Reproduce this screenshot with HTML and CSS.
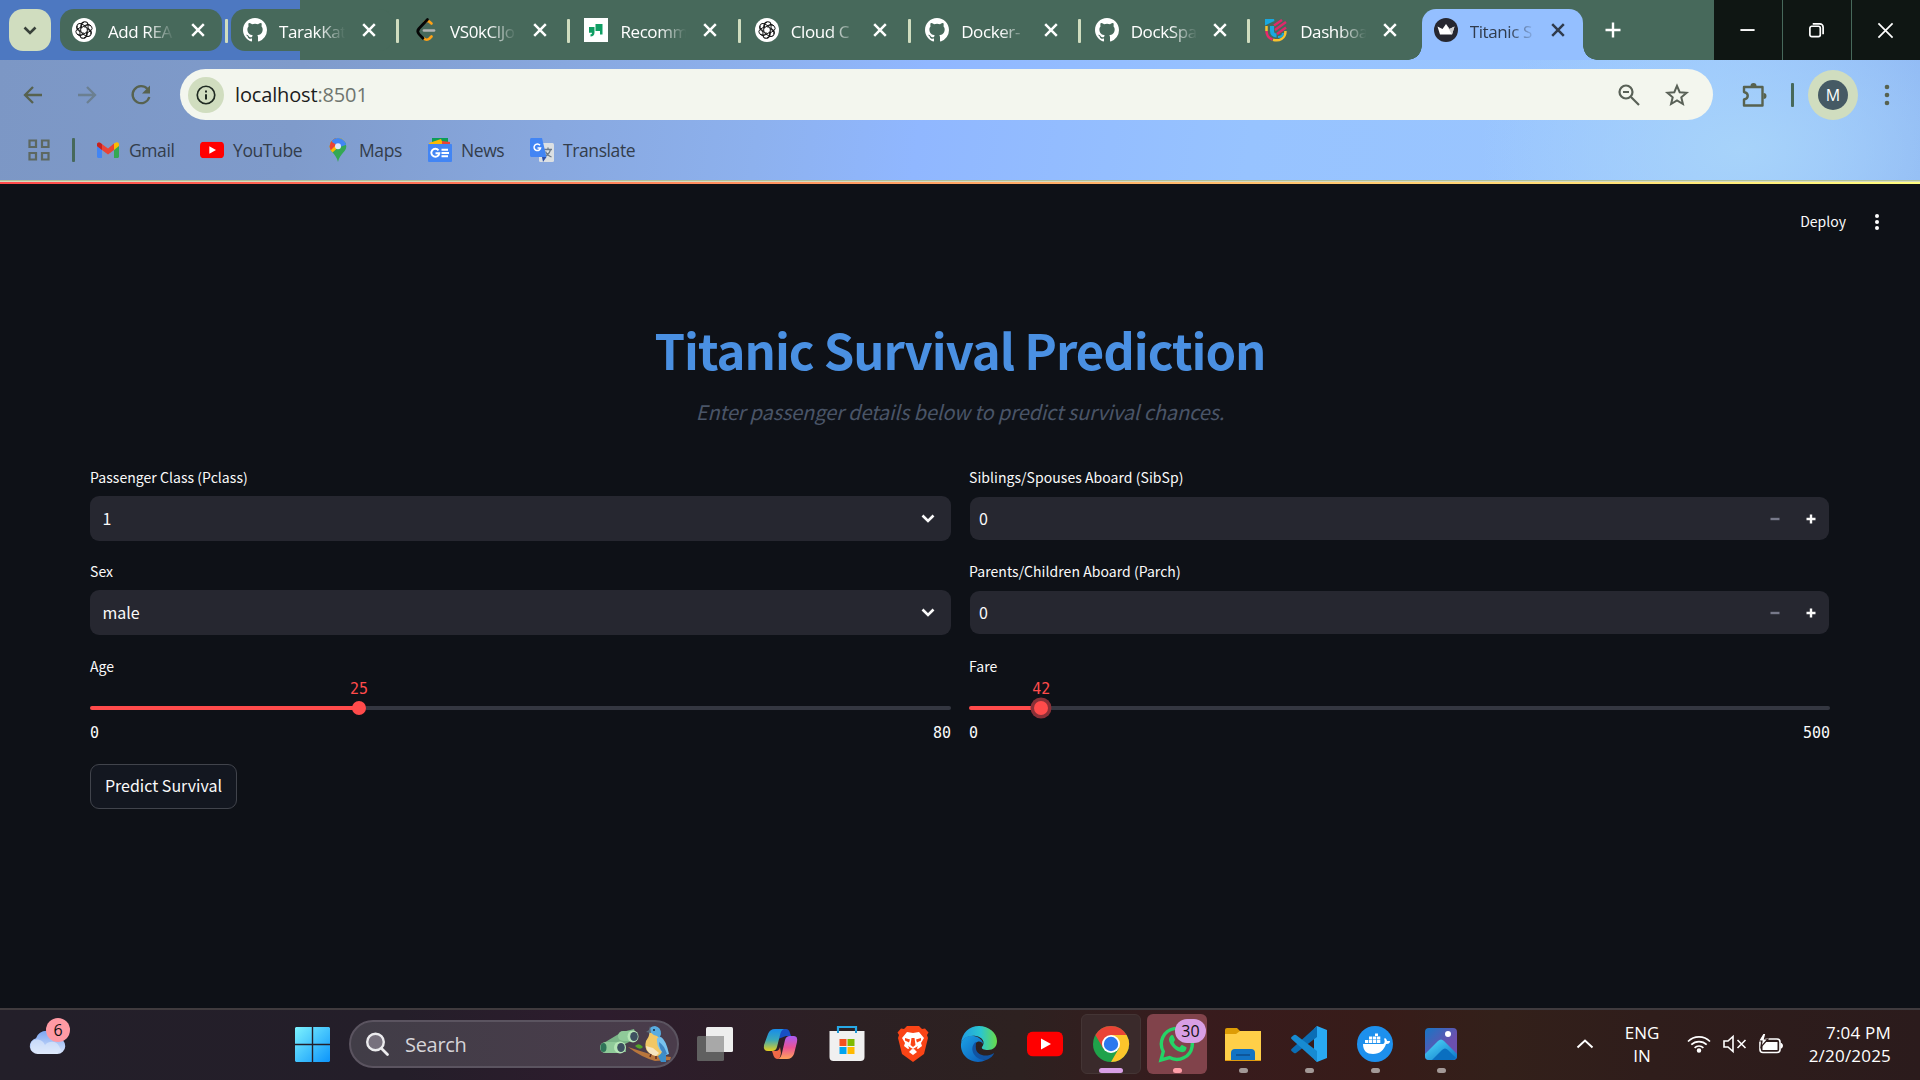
FILE: index.html
```html
<!DOCTYPE html>
<html lang="en">
<head>
<meta charset="utf-8">
<title>Titanic Survival Prediction</title>
<link rel="stylesheet" href="styles.css">
</head>
<body>
<svg class="defs" aria-hidden="true">
  <symbol id="x" viewBox="0 0 24 24"><path d="M6.200 6.200l11.600 11.600M17.800 6.200L6.200 17.800" fill="none" stroke="currentColor" stroke-width="2.500"/></symbol>
  <symbol id="github" viewBox="0 0 16 16"><path fill="#fff" d="M8 0C3.58 0 0 3.58 0 8c0 3.54 2.29 6.53 5.47 7.59.4.07.55-.17.55-.38 0-.19-.01-.82-.01-1.49-2.01.37-2.53-.49-2.69-.94-.09-.23-.48-.94-.82-1.13-.28-.15-.68-.52-.01-.53.63-.01 1.08.58 1.23.82.72 1.21 1.87.87 2.33.66.07-.52.28-.87.51-1.07-1.78-.2-3.64-.89-3.64-3.95 0-.87.31-1.59.82-2.15-.08-.2-.36-1.02.08-2.12 0 0 .67-.21 2.2.82a7.6 7.6 0 0 1 4 0c1.53-1.04 2.2-.82 2.2-.82.44 1.1.16 1.92.08 2.12.51.56.82 1.27.82 2.15 0 3.07-1.87 3.75-3.65 3.95.29.25.54.73.54 1.48 0 1.07-.01 1.93-.01 2.2 0 .21.15.46.55.38A8.01 8.01 0 0 0 16 8c0-4.42-3.58-8-8-8z"/></symbol>
  <symbol id="gpt" viewBox="0 0 24 24"><circle cx="12" cy="12" r="12" fill="#fff"/><g fill="none" stroke="#111" stroke-width=".95"><path id="petal" d="M12 9.200L15.600 7.100a3.300 3.300 0 0 1 3.300 5.600l-4.300 2.500M12 4.400a3.200 3.200 0 0 0-3.300 3.100v5"/><use href="#petal" transform="rotate(60 12 12)"/><use href="#petal" transform="rotate(120 12 12)"/><use href="#petal" transform="rotate(180 12 12)"/><use href="#petal" transform="rotate(240 12 12)"/><use href="#petal" transform="rotate(300 12 12)"/></g></symbol>
  <symbol id="yt" viewBox="0 0 36 25"><rect width="36" height="25" rx="6" fill="#f00"/><path d="M14 7l10 5.500-10 5.500z" fill="#fff"/></symbol>
  <symbol id="chev" viewBox="0 0 24 24"><path d="M6.500 9.500L12 15l5.500-5.500" fill="none" stroke="currentColor" stroke-width="2.600"/></symbol>
</svg>

<header class="tabstrip">
  <button class="tabsearch"><svg><use href="#chev"/></svg></button>
  <div class="tab pill"><svg class="fav"><use href="#gpt"/></svg><span class="name">Add REA</span><svg class="close"><use href="#x"/></svg></div>
  <div class="tab pill"><svg class="fav"><use href="#github"/></svg><span class="name">TarakKat</span><svg class="close"><use href="#x"/></svg></div>
  <div class="tab"><svg class="fav" viewBox="0 0 24 24"><g fill="none" stroke-width="2.700" stroke-linecap="round"><path d="M17.500 5.500l-2-1.700c-1.500-1.200-3.500-1-4.800.3" stroke="#ffa116"/><path d="M17.500 18.500l-2 2c-1.600 1.500-4 1.500-5.600 0" stroke="#ffa116"/><path d="M10 12.500h10" stroke="#b3b3b3"/><path d="M13.500 1.500L5 10.500c-1.600 1.800-1.600 3.800 0 5.600l4 4.200" stroke="#050505"/></g></svg><span class="name">VS0kClJo</span><svg class="close"><use href="#x"/></svg></div>
  <div class="tab"><svg class="fav" viewBox="0 0 24 24"><path fill="#fff" d="M0 0h24v24H0z"/><path fill="#0f9d63" d="M5 9h5.500v5.500c0 2.500-1.500 4-4 4v-2.300c1 0 1.500-.5 1.500-1.500H5zM11.500 6h7v10.500H16V13h-4.500z"/></svg><span class="name">Recomm</span><svg class="close"><use href="#x"/></svg></div>
  <div class="tab"><svg class="fav"><use href="#gpt"/></svg><span class="name">Cloud C</span><svg class="close"><use href="#x"/></svg></div>
  <div class="tab late"><svg class="fav"><use href="#github"/></svg><span class="name">Docker-</span><svg class="close"><use href="#x"/></svg></div>
  <div class="tab late"><svg class="fav"><use href="#github"/></svg><span class="name">DockSpa</span><svg class="close"><use href="#x"/></svg></div>
  <div class="tab late nosep"><svg class="fav" viewBox="0 0 24 24" fill="none" stroke-width="2"><path d="M2 2h8L2 6z" fill="#19a8e0" stroke="#19a8e0"/><path d="M8 8v5c0 3 2 4.500 4.500 4.500" stroke="#19a8e0" stroke-width="4"/><path d="M2.500 8v5" stroke="#f9c22e" stroke-width="2.500"/><path d="M2.500 13c0 4 2 7 6 8.500" stroke="#e82a6a" stroke-width="2.500"/><path d="M9 21.700c6 2 12.500-1 12.500-8.700" stroke="#f9c22e" stroke-width="2.500"/><path d="M10 7.500l8-5.500M11 12l11-8M13 16l9-6.500" stroke="#e0286b" stroke-width="2.500"/><path d="M14 19c4 0 5-2 5-4" stroke="#19a8e0" stroke-width="2"/></svg><span class="name">Dashboa</span><svg class="close"><use href="#x"/></svg></div>
  <div class="tab active"><svg class="fav" viewBox="0 0 24 24"><circle cx="12" cy="12" r="12" fill="#262730"/><path d="M3.500 8.500l5 2.500L12 6l3.500 5 5-2.500-2.500 8H6z" fill="#fff"/><path d="M12 6l3.500 5 5-2.500-2.500 8z" fill="#d0d0d0"/></svg><span class="name">Titanic S</span><svg class="close"><use href="#x"/></svg></div>
  <svg class="plus" viewBox="0 0 24 24"><path d="M12 4.500v15M4.500 12h15" stroke="#fff" stroke-width="2.400"/></svg>
  <div class="winctl">
    <span><svg viewBox="0 0 18 18"><path d="M1.500 8.500h15" stroke="#fff" stroke-width="2"/></svg></span>
    <span><svg viewBox="0 0 18 18" fill="none" stroke="#fff" stroke-width="1.800"><rect x="2" y="4.500" width="11" height="11" rx="2"/><path d="M5 2h7.500a3.500 3.500 0 0 1 3.500 3.500V13"/></svg></span>
    <span><svg viewBox="0 0 18 18"><path d="M1.500 1.500l15 15M16.500 1.500l-15 15" stroke="#fff" stroke-width="1.800"/></svg></span>
  </div>
</header>

<section class="chrome">
  <div class="toolbar">
    <svg class="nav" viewBox="0 0 24 24"><path d="M21 12H5M12 4l-8 8 8 8" fill="none" stroke="#57624f" stroke-width="2.300"/></svg>
    <svg class="nav dim" viewBox="0 0 24 24"><path d="M3 12h16M12 4l8 8-8 8" fill="none" stroke="#57624f" stroke-width="2.300"/></svg>
    <svg class="nav" viewBox="0 0 24 24"><path d="M18.500 6A8.500 8.500 0 1 0 20.300 14" fill="none" stroke="#57624f" stroke-width="2.300"/><path d="M21 2.500v8h-8z" fill="#57624f"/></svg>
    <div class="omnibox">
      <span class="info"><svg viewBox="0 0 24 24"><circle cx="12" cy="12" r="10.500" fill="none" stroke="#1f2a22" stroke-width="2"/><path d="M12 11v6.500M12 6.500v2.400" stroke="#1f2a22" stroke-width="2.400"/></svg></span>
      <span class="url">localhost<i>:8501</i></span>
      <svg class="zoomout" viewBox="0 0 24 24" fill="none" stroke="#596157" stroke-width="2.200"><circle cx="9" cy="9" r="6.500"/><path d="M14 14l8 8M6 9h6"/></svg>
      <svg class="star" viewBox="0 0 24 24" fill="none" stroke="#596157" stroke-width="2"><path d="M12 2.800l2.700 6.400 6.900.6-5.300 4.500 1.600 6.700L12 17.400 6.100 21l1.600-6.700-5.300-4.500 6.900-.6z"/></svg>
    </div>
    <svg class="puzzle" viewBox="0 0 26 26"><path d="M3 5h18.500v18.500H3v-6c5-1 5-6.500 0-7.500z" fill="none" stroke="#57624f" stroke-width="2.400" stroke-linejoin="round"/><path d="M9.500 4a3 3 0 0 1 6 0zM22.500 11a3 3 0 0 1 0 6z" fill="#57624f"/></svg>
    <i class="bar"></i>
    <span class="avatar"><b>M</b></span>
    <svg class="kebab" viewBox="0 0 6 24" fill="#57624f"><circle cx="3" cy="4" r="2.300"/><circle cx="3" cy="12" r="2.300"/><circle cx="3" cy="20" r="2.300"/></svg>
  </div>
  <nav class="bookmarks">
    <svg class="apps" viewBox="0 0 22 22" fill="none" stroke="#5d6860" stroke-width="2.200"><path d="M1.500 1.500h6.500V8H1.500zM14 1.500h6.500V8H14zM1.500 14h6.500v6.500H1.500zM14 14h6.500v6.500H14z"/></svg>
    <i class="bar"></i>
    <a class="gmail"><svg viewBox="0 0 24 24"><path d="M1 6v12.500c0 .8.700 1.500 1.500 1.500H6V9z" fill="#4285f4"/><path d="M23 6v12.500c0 .8-.7 1.500-1.500 1.500H18V9z" fill="#34a853"/><path d="M18 5.500l2-1c1.500-.6 3 .3 3 2V8l-5 4z" fill="#fbbc04"/><path d="M1 8V6.500C1 4.700 2.800 3.800 4.200 4.800L12 10.500l6-5V12l-6 4.500L6 12z" fill="#ea4335"/><path d="M1 8V6.500C1 4.500 3 3.800 4.500 5L6 6.200V12z" fill="#c5221f"/></svg>Gmail</a>
    <a class="youtube"><svg viewBox="0 0 36 36"><use href="#yt" y="5.500" width="36" height="25"/></svg>YouTube</a>
    <a class="maps"><svg viewBox="0 0 24 24"><defs><clipPath id="pin"><path d="M12 0a8.300 8.300 0 0 0-8.300 8.300C3.700 14 10 15.500 12 24c2-8.500 8.300-10 8.300-15.700A8.300 8.300 0 0 0 12 0z"/></clipPath></defs><g clip-path="url(#pin)"><path d="M0 0h24v24H0z" fill="#34a853"/><path d="M0 17L14 6l6-6H0z" fill="#fbbc04"/><path d="M0 17L24-5" stroke="#fbbc04" stroke-width="5"/><path d="M0 0h10v7L5 12H0z" fill="#ea4335"/><path d="M6 0h12l4 6-8 3-8-5z" fill="#4285f4"/></g><circle cx="12" cy="8.300" r="3" fill="#dfe9fb"/></svg>Maps</a>
    <a class="news"><svg viewBox="0 0 24 24"><path d="M4 0h16v8H4z" fill="#0c9d58"/><path d="M1 5l12-4 3 7H2z" fill="#ffb900"/><path d="M14 3l8 1v5h-8z" fill="#ea4335"/><rect y="6" width="24" height="18" rx="1" fill="#4285f4"/><path d="M10.500 12.300a4 4 0 1 0 .8 3H7.500M13.500 11.800H20M13.500 15H21M13.500 18.200H20" fill="none" stroke="#fff" stroke-width="1.900"/></svg>News</a>
    <a class="translate"><svg viewBox="0 0 24 24"><rect x="9" y="5" width="15" height="19" rx="1.500" fill="#dce0e3"/><path d="M14 11.500h8M18 9.500v2M20.500 11.500c-.8 3.500-3 5.500-5.500 7M15.500 13.500c1 2.500 3.500 4.500 6 5.500" stroke="#6c7a89" stroke-width="1.300" fill="none"/><path d="M1.500 0H12l4.500 19H1.500C.7 19 0 18.300 0 17.500v-16C0 .700.700 0 1.500 0z" fill="#4285f4"/><path d="M12 19h4.500L13 24z" fill="#2c4fa8"/><path d="M10 7.300a3.300 3.300 0 1 0 .6 2.600H7.500" fill="none" stroke="#fff" stroke-width="1.500"/></svg>Translate</a>
  </nav>
</section>

<main class="app">
  <div class="appbar"><span>Deploy</span><svg viewBox="0 0 6 18" fill="#fff"><circle cx="3" cy="3" r="2"/><circle cx="3" cy="9" r="2"/><circle cx="3" cy="15" r="2"/></svg></div>
  <h1>Titanic Survival Prediction</h1>
  <p class="sub">Enter passenger details below to predict survival chances.</p>
  <form class="grid">
    <div class="field"><label>Passenger Class (Pclass)</label><div class="select"><span>1</span><svg><use href="#chev"/></svg></div></div>
    <div class="field"><label>Siblings/Spouses Aboard (SibSp)</label><div class="number"><span>0</span><svg viewBox="0 0 12 12" class="minus"><path d="M1.500 6h9"/></svg><svg viewBox="0 0 12 12"><path d="M1.500 6h9M6 1.500v9"/></svg></div></div>
    <div class="field"><label>Sex</label><div class="select"><span>male</span><svg><use href="#chev"/></svg></div></div>
    <div class="field"><label>Parents/Children Aboard (Parch)</label><div class="number"><span>0</span><svg viewBox="0 0 12 12" class="minus"><path d="M1.500 6h9"/></svg><svg viewBox="0 0 12 12"><path d="M1.500 6h9M6 1.500v9"/></svg></div></div>
    <div class="field"><label>Age</label><div class="slider" style="--v:31.25%"><div class="track"><span class="val">25</span><b class="thumb"></b></div><div class="ends"><span>0</span><span>80</span></div></div></div>
    <div class="field"><label>Fare</label><div class="slider focus" style="--v:8.4%"><div class="track"><span class="val">42</span><b class="thumb"></b></div><div class="ends"><span>0</span><span>500</span></div></div></div>
  </form>
  <button class="predict">Predict Survival</button>
</main>

<footer class="taskbar">
  <div class="weather"><svg viewBox="0 0 36 28"><defs><linearGradient id="cl" x2="0" y2="1"><stop stop-color="#7aa5f2"/><stop offset="1" stop-color="#dbe6fb"/></linearGradient></defs><path d="M9 27a8 8 0 0 1-2-15.800A11.500 11.500 0 0 1 28.500 11 8 8 0 0 1 28 27z" fill="url(#cl)"/><path d="M2 16c3-6 12-4 14 2 4-5 12-4 14 1l2 4-4 4H9l-7-4z" fill="#e3ecfc" opacity=".6"/></svg><b>6</b></div>
  <svg class="start" viewBox="0 0 35 35"><defs><linearGradient id="wn" x2="1" y2="1"><stop stop-color="#7df3fe"/><stop offset="1" stop-color="#0c94fb"/></linearGradient></defs><path fill="url(#wn)" d="M1 0h15.800v16.800H0V1zM18.200 0H34l1 1v15.800H18.200zM0 18.200h16.800V35H1l-1-1zM18.200 18.200H35V34l-1 1H18.200z"/></svg>
  <div class="search">
    <svg class="mag" viewBox="0 0 24 24"><circle cx="10.500" cy="10" r="8.300" fill="#77717d" stroke="#ececee" stroke-width="2.400"/><path d="M16.500 16.500l6 6" stroke="#ececee" stroke-width="2.800" stroke-linecap="round"/></svg>
    <span>Search</span>
    <svg class="art" viewBox="0 0 72 38">
      <path d="M2 19l20-12 12-3 3 9-12 6 1 8-14-1-9-2z" fill="#79b487"/>
      <rect x="0" y="17" width="22" height="11" rx="5.500" fill="#8fca99"/><ellipse cx="20" cy="22.500" rx="6" ry="6" fill="#b5e6b6"/><ellipse cx="21" cy="22.500" rx="3.800" ry="4.500" fill="#3d5060"/>
      <rect x="18" y="6" width="18" height="10" rx="5" fill="#8fca99"/><ellipse cx="33" cy="11.500" rx="5.500" ry="6" fill="#b5e6b6"/><ellipse cx="34" cy="11.500" rx="3.800" ry="4.600" fill="#3d5060"/><ellipse cx="3.500" cy="22.500" rx="3" ry="4.500" fill="#2f7458"/>
      <path d="M28 22q12 4 25 8l18 2-1 3-15 1q-14-4-27-14z" fill="#b8763c"/><path d="M35 21q4-4 8 1-3 4-8-1z" fill="#54a629"/>
      <path d="M61 27l5 2v8h-5l-3-6z" fill="#3c8fc9"/>
      <path d="M49 7q0-6 6-6 6 1 6 8l-2 6-9-3z" fill="#58ace0"/><path d="M50 7q-1 5-4 9-2 7 2 11 4 4 10 4 6-3 4-11-1-6-5-9-4-1-7-4z" fill="#f1c765"/><path d="M46 21q1 8 10 10l3-3-6-5z" fill="#f6e5c0"/><path d="M57 16q-1-4 4-4 5 3 8 17l-3 1q-9-5-9-14z" fill="#77c2ef"/><path d="M59 17q5 3 8 12l-2 1q-6-5-6-13z" fill="#3f86c4"/><path d="M50 1l-1 4-3 2 5 1z" fill="#5b6d7c"/><circle cx="54" cy="5" r="1" fill="#152638"/><path d="M51 29l-1 3M56 31v3" stroke="#5d2d25" stroke-width="1.500"/>
    </svg>
  </div>
  <div class="pins">
    <span class="pin"><svg viewBox="0 0 36 36"><rect x="9" y="1" width="27" height="25" rx="1.500" fill="#eee"/><rect y="10" width="27" height="25" rx="1.500" fill="#606060"/><path d="M9 10h18v16H9z" fill="#a8a8a8"/></svg></span>
    <span class="pin"><svg viewBox="0 0 36 36"><defs><linearGradient id="c1" x2="0" y2="1"><stop stop-color="#178cec"/><stop offset=".5" stop-color="#3ba9b8"/><stop offset="1" stop-color="#e6cf1e"/></linearGradient><linearGradient id="c2" x2="0" y2="1"><stop stop-color="#a95cf5"/><stop offset=".5" stop-color="#ea5496"/><stop offset="1" stop-color="#ffa35a"/></linearGradient></defs><path d="M13 3h10q3 0 4 4l1 3h-5l-8 3z" fill="#194fc4"/><path d="M12 3h9q-3 1-4 6l-3 12q-1 4-5 4H5q-5 0-4-6L5 8q2-5 7-5z" fill="url(#c1)"/><path d="M24 33h-9q3-1 4-6l3-13q1-4 5-4h4q4 0 3 6l-3 12q-2 5-7 5z" fill="url(#c2)"/><path d="M9 25h4q3 0 4-4l1 6q-1 6-3 6-4 0-5-5z" fill="#ef6947"/></svg></span>
    <span class="pin"><svg viewBox="0 0 36 36"><path d="M9 8V1h18v7" fill="none" stroke="#27a9e7" stroke-width="2.200"/><path d="M.5 5h35v26q0 4-4 4h-27q-4 0-4-4z" fill="#f0f0f0"/><path d="M9 7V4M27 7V4" stroke="#1e98d5" stroke-width="2"/><path d="M10.500 13h7v7h-7z" fill="#f25022"/><path d="M18.500 13h7v7h-7z" fill="#7fba00"/><path d="M10.500 21h7v7h-7z" fill="#00a4ef"/><path d="M18.500 21h7v7h-7z" fill="#ffb900"/></svg></span>
    <span class="pin"><svg viewBox="0 0 36 36"><path d="M12 0h12l3 3 3-.5 3.500 4L32 9l1 3-4 16-11 8-11-8L3 12l1-3-1.500-2.500 3.500-4L9 3z" fill="#fa4416"/><path d="M12 6l6 1 6-1 5 6-3 5 1 3-4 3-2-1-1 2 2 2-4 3-4-3 2-2-1-2-2 1-4-3 1-3-3-5z" fill="#fff"/><path d="M10 12l5 1.500-1 3-4-2zM26 12l-5 1.500 1 3 4-2zM16.500 12h3l1 7-2.500 2-2.500-2zM13 20l5 3 5-3-2 4-3-1-3 1z" fill="#fa4416"/></svg></span>
    <span class="pin"><svg viewBox="0 0 36 36"><defs><linearGradient id="e1"><stop stop-color="#209be3"/><stop offset=".55" stop-color="#2bc6cf"/><stop offset="1" stop-color="#68dc49"/></linearGradient><linearGradient id="e2" x2="1" y2="1"><stop stop-color="#1ba1e5"/><stop offset="1" stop-color="#0b5ab7"/></linearGradient></defs><path d="M0 17C1 7 8 0 18 0s18 7 18 15c0 6-4 9-9 9-4 0-7-1-6-3 4-5 0-10-6-11C8 9 2 12 0 17z" fill="url(#e1)"/><path d="M0 18c1-6 7-9 13-8 5 1 9 4 9 8-3-5-9-2-9 4 0 7 6 11 12 12-12 6-26-3-25-16z" fill="url(#e2)"/><path d="M15 16c-7 4-4 18 10 18 4-1 8-5 8-7-8 5-17 2-18-4-.4-3 0-5 0-7z" fill="#1153a1"/></svg></span>
    <span class="pin"><svg viewBox="0 0 36 36"><use href="#yt" y="5.500" width="36" height="25"/></svg></span>
    <span class="pin current"><svg viewBox="0 0 36 36"><circle cx="18" cy="18" r="18" fill="#1fa24a"/><path d="M2.400 9A18 18 0 0 1 33.600 9H18l-7.800 13.500z" fill="#ea4335"/><path d="M33.600 9A18 18 0 0 1 18 36l7.800-13.500L18 9z" fill="#fcc52b"/><circle cx="18" cy="18" r="9" fill="#fff"/><circle cx="18" cy="18" r="7.200" fill="#2b78ee"/></svg></span>
    <span class="pin alert"><svg viewBox="0 0 36 36"><path d="M2 34l2.300-8.500A15.500 15.500 0 1 1 10.500 31.600z" fill="none" stroke="#25d366" stroke-width="3.400"/><path d="M12 9.500c1-.7 2-.5 2.500.5l1.500 3.500c.3.700-.8 2-1.300 2.700 1.200 2.500 3 4.200 5.700 5.300l1.800-2c.4-.5.900-.5 1.400-.3l3.400 1.700c1.300.7-.2 4-1.500 4.700-5 3-15-5.500-15.500-11.500-.1-1.700.8-3.700 2-4.600z" fill="#25d366"/></svg><b class="count">30</b></span>
    <span class="pin run"><svg viewBox="0 0 36 36"><path d="M0 4q0-2 2-2h10l4 4-3 4H0z" fill="#dd9c05"/><path d="M0 8h11l4-3h21v29H0z" fill="#ffcf48"/><path d="M6 34V27q0-4 4-4h16q4 0 4 4v7z" fill="#1273c4"/><path d="M11 29h14" stroke="#0c4d8c" stroke-width="1.500"/><path d="M0 34h36v1H0z" fill="#e09b10"/></svg></span>
    <span class="pin run"><svg viewBox="0 0 36 36"><path d="M26 0l10 4v28l-10 4-3-3V3z" fill="#29a9f2"/><path d="M26 0v11L5 27q-1 .7-2 0l-2.500-2q-1-1 0-2z" fill="#0b6eb5"/><path d="M26 36V25L5 9q-1-.7-2 0L.500 11q-1 1 0 2z" fill="#178bd2"/></svg></span>
    <span class="pin run"><svg viewBox="0 0 36 36"><circle cx="18" cy="18" r="18" fill="#1d90ed"/><path d="M6 18h20c2 0 2-4 1-5l1-1c2 1 2 3 2 3h3c0 3-3 3-4 3-2 6-6 10-13 10-6 0-10-3-10-10z" fill="#fff"/><path d="M8 14h3.300v3H8zM12 14h3.300v3H12zM16 14h3.300v3H16zM20 14h3.300v3H20zM12 10.500h3.300v3H12zM16 10.500h3.300v3H16zM20 10.500h3.300v3H20zM18 7.500h3v2.500h-3z" fill="#fff"/></svg></span>
    <span class="pin run"><svg viewBox="0 0 36 36"><defs><linearGradient id="ph" x2="1" y2="1"><stop stop-color="#1577c6"/><stop offset=".6" stop-color="#6b50ae"/></linearGradient><linearGradient id="mt" x2="1" y2="1"><stop stop-color="#53dcfb"/><stop offset="1" stop-color="#0b75c9"/></linearGradient></defs><rect x="2" y="2" width="32" height="32" rx="4" fill="url(#ph)"/><path d="M2 28l13-13q3-3 6 0l13 13v2q0 4-4 4H6q-4 0-4-4z" fill="url(#mt)"/><path d="M9 34l10-10q3-3 6 0l8 8-3 2z" fill="#0a6fc0"/><circle cx="25" cy="8" r="3" fill="#fff"/></svg></span>
  </div>
  <div class="tray">
    <svg class="up" viewBox="0 0 18 10"><path d="M1.500 8.500L9 1.500l7.500 7" fill="none" stroke="#fff" stroke-width="2"/></svg>
    <span class="lang">ENG<br>IN</span>
    <svg class="wifi" viewBox="0 0 24 18" fill="none" stroke="#fff" stroke-width="1.700"><path d="M1 6.500a15.500 15.500 0 0 1 22 0M4.300 9.700a11 11 0 0 1 15.400 0M7.600 12.800a6.300 6.300 0 0 1 8.800 0"/><circle cx="12" cy="15.500" r="1.400" fill="#fff"/></svg>
    <svg class="vol" viewBox="0 0 24 18" fill="none" stroke="#fff" stroke-width="1.600"><path d="M1 6h4l5-4.500v15L5 12H1zM14.500 5l8 8M22.500 5l-8 8"/></svg>
    <svg class="bat" viewBox="0 0 24 20"><rect x="1" y="5" width="20" height="13.500" rx="3" fill="none" stroke="#fff" stroke-width="1.600"/><path d="M3.500 16V8H18.500v8zM21.500 9h1q1.500 1 1.500 2.800t-1.500 2.800h-1z" fill="#fff"/><path d="M4-.5L-.5 7H3l-1 6 7-8H5.500L7-.5z" fill="#fff" stroke="#2d1b1a" stroke-width="1.200"/></svg>
    <span class="clock">7:04 PM<br>2/20/2025</span>
  </div>
</footer>
</body>
</html>
```
FILE: styles.css
```css
* { box-sizing: border-box; }
body { margin: 0; width: 1920px; height: 1080px; overflow: hidden; display: flex; flex-direction: column; background: #0e1117; font-family: "Open Sans", sans-serif; }
svg { display: block; flex: none; overflow: visible; }
i, b { font-style: normal; font-weight: 400; }
button { font: inherit; padding: 0; margin: 0; }
.defs { width: 0; height: 0; position: absolute; }

/* tab strip */
.tabstrip { height: 60px; flex: none; display: flex; padding: 9px 0 0 9px; background: linear-gradient(90deg, #4d78c1 300px, #47695b 300px); }
.tabsearch { width: 42px; height: 42px; border: 0; border-radius: 14px; background: #d0ddbf; margin-right: 9px; display: grid; place-items: center; color: #38413a; }
.tabsearch svg { width: 24px; height: 24px; }
.tab { width: 170.400px; height: 42px; flex: none; display: flex; align-items: center; padding-left: 12px; color: #fff; position: relative; }
.tab.late { width: 169.500px; }
.tab::after { content: ""; position: absolute; right: 2px; top: 10px; width: 3px; height: 24px; background: #d0ddbf; border-radius: 1px; }
.tab.pill { background: #47695b; border-radius: 14px; width: 162px; margin-right: 9px; }
.tab.pill::after { right: -6px; }
.tab.nosep::after { display: none; }
.fav { width: 24px; height: 24px; margin-right: 12px; }
.name { width: 67px; white-space: nowrap; font-size: 17px; letter-spacing: -.4px; line-height: 24px; padding-top: 3px; margin-right: 10.500px; -webkit-mask-image: linear-gradient(90deg, #000 58%, transparent 99%); mask-image: linear-gradient(90deg, #000 58%, transparent 99%); }
.close { width: 24px; height: 24px; }
.tab.active { width: 161px; height: 51px; padding-bottom: 9px; background: #94bfff; border-radius: 14px 14px 0 0; color: #303b4c; }
.tab.active .name { margin-right: 9.500px; }
.tab.active::before, .tab.active::after { content: ""; position: absolute; width: 14px; height: 14px; bottom: 0; top: auto; left: -14px; right: auto; border-radius: 0; background: radial-gradient(circle at 0 0, transparent 13.500px, #94bfff 14px); }
.tab.active::after { left: 161px; background: radial-gradient(circle at 100% 0, transparent 13.500px, #94bfff 14px); }
.plus { width: 24px; height: 24px; margin: 9px 0 0 18px; }
.winctl { display: flex; margin: -9px 0 0 auto; width: 206px; height: 60px; gap: 1px; background: #47695b; }
.winctl span { flex: 1; background: #0f1613; display: grid; place-items: center; padding-right: 2px; }
.winctl svg { width: 17px; height: 17px; }

/* toolbar and bookmarks */
.chrome { height: 124px; flex: none; position: relative; background: radial-gradient(ellipse 260px 160px at 1740px 90px, #a7d3fa, transparent), linear-gradient(98deg, #7c97c5 0, #7f9bcb 300px, #88a8df 560px, #8db1ee 760px, #90b7ff 920px, #97c3ff 1250px, #9bc6fe 1700px, #8fb8f3 1920px); }
.chrome::after { content: ""; position: absolute; left: 0; right: 0; bottom: 0; height: 4px; background: linear-gradient(#afc09b 1px, #d3dbc0 1px, #d3dbc0 2px, transparent 2px), linear-gradient(90deg, #ff4b4b, #ffa263 48%, #fffd80); }
.toolbar { height: 69px; display: flex; align-items: center; padding-left: 21px; color: #57624f; }
.nav { width: 24px; height: 24px; margin-right: 30px; }
.nav:nth-child(3) { margin-right: 27px; }
.dim { opacity: .45; }
.omnibox { width: 1533px; height: 51px; border-radius: 26px; background: #f3f6ee; display: flex; align-items: center; padding-left: 8px; }
.info { width: 36px; height: 36px; border-radius: 50%; background: #d0ddbf; display: grid; place-items: center; margin-right: 11px; }
.info svg { width: 20px; height: 20px; }
.url { font-size: 20px; letter-spacing: -.15px; color: #1b201c; margin-right: auto; line-height: 30px; }
.url i { color: #6f756e; }
.zoomout { width: 24px; height: 24px; margin-right: 24px; }
.star { width: 24px; height: 24px; margin-right: 24px; }
.puzzle { width: 26px; height: 26px; margin: 0 25px 0 28px; }
.bar { width: 3px; height: 24px; background: #47695b; border-radius: 1px; }
.toolbar .bar { margin-left: -1px; }
.avatar { width: 50px; height: 50px; border-radius: 50%; background: #d0ddbf; display: grid; place-items: center; margin: 0 26px 0 14px; }
.avatar b { width: 30px; height: 30px; border-radius: 50%; background: #455a64; color: #fff; font-size: 16px; line-height: 30px; text-align: center; }
.kebab { width: 6px; height: 24px; }
.bookmarks { height: 42px; display: flex; align-items: center; padding-left: 28px; font-size: 17.500px; letter-spacing: -.4px; color: #333d4b; }
.apps { width: 22px; height: 22px; margin-right: 22px; }
.bookmarks a { display: flex; align-items: center; gap: 9px; white-space: nowrap; }
.bookmarks a svg { width: 24px; height: 24px; }
.gmail { width: 104px; margin-left: 21px; }
.youtube { width: 126px; }
.maps { width: 102px; }
.news { width: 102px; }

/* application */
.app { flex: 1; padding: 0 90px; font-family: "Noto Sans CJK JP", "Noto Sans", sans-serif; color: #fafafa; position: relative; }
.appbar { height: 75px; margin-right: -50px; display: flex; justify-content: flex-end; align-items: center; font-size: 14px; }
.appbar span { margin-top: -2px; }
.appbar svg { width: 6px; height: 18px; margin: 0 0 0 28px; }
h1 { margin: 50px 0 0; height: 80px; line-height: 80px; text-align: center; font-size: 49px; letter-spacing: -1px; font-weight: 700; color: #4a90e2; white-space: nowrap; }
.sub { margin: 8px 0 0; height: 30px; line-height: 30px; text-align: center; font-size: 20px; letter-spacing: -.13px; font-style: italic; color: #4a5568; white-space: nowrap; }
.grid { margin-top: 38px; display: grid; grid-template-columns: 1fr 1fr; column-gap: 18px; row-gap: 0; }
.field { height: 94.300px; }
.field:nth-last-child(-n+2) { height: 115px; }
label { display: block; font-size: 14px; letter-spacing: .05px; line-height: 25px; height: 31px; white-space: nowrap; }
.select, .number { height: 45px; border-radius: 9px; background: #262730; display: flex; align-items: center; font-size: 16px; padding: 0 11px 0 12.500px; }
.select span, .number span { margin-top: -2px; }
.number { height: 43px; margin: 1px 1px 0; padding: 0 12px 0 9px; }
.select svg { width: 24px; height: 24px; margin-left: auto; margin-top: -1px; }
.number svg { width: 12px; height: 12px; stroke: #fafafa; stroke-width: 2.400; margin-left: 24px; }
.number .minus { margin-left: auto; stroke: #77798a; }
.slider { font-family: "DejaVu Sans Mono", monospace; font-size: 15px; padding-top: 21px; }
.track { height: 4px; border-radius: 2px; position: relative; background: linear-gradient(90deg, #ff4b4b var(--v), #343741 var(--v)); }
.thumb { position: absolute; left: var(--v); top: 2px; width: 14px; height: 14px; margin: -7px 0 0 -7px; border-radius: 50%; background: #ff4b4b; }
.focus .thumb { box-shadow: 0 0 0 3.500px #8a3037; }
.val { position: absolute; left: var(--v); bottom: 12px; transform: translateX(-50%); color: #ff4b4b; line-height: 18px; }
.ends { display: flex; justify-content: space-between; line-height: 20px; margin-top: 13px; }
.predict { display: block; width: 147px; height: 45px; border: 1px solid #41444c; border-radius: 9px; background: #131720; color: #fafafa; font-size: 16px; white-space: nowrap; margin-top: -5px; padding-bottom: 2px; }

/* taskbar */
.taskbar { height: 72px; flex: none; display: flex; align-items: center; padding-bottom: 2px; color: #fff; border-top: 2px solid #403b3e; background: linear-gradient(90deg, #231f29 0, #241e29 400px, #2d1c2d 600px, #2c2023 850px, #2d2120 1020px, #381b1d 1200px, #371c19 1380px, #33201a 1500px, #2f1d1b 1650px, #2b1b1c); }
.weather { width: 36px; height: 28px; margin: -6px 230px 0 29px; position: relative; }
.weather svg { width: 36px; height: 28px; }
.weather b { position: absolute; left: 17px; top: -9px; width: 24px; height: 24px; border-radius: 50%; background: #ff9aa4; color: #111; font-size: 16px; line-height: 24px; text-align: center; }
.start { width: 35px; height: 35px; margin-right: 19px; }
.search { width: 330px; height: 48px; border-radius: 24px; border: 2px solid #5b5460; background: linear-gradient(90deg, #413d47, #4a3c4b); display: flex; align-items: center; padding: 0 5px 0 14px; margin-right: 6px; color: #d6d4d8; font-size: 20px; }
.mag { width: 24px; height: 24px; margin-right: 16px; }
.search span { letter-spacing: -.3px; }
.art { width: 72px; height: 38px; margin-left: auto; }
.pins { display: flex; gap: 6px; }
.pin { width: 60px; height: 60px; display: grid; place-items: center; border-radius: 6px; position: relative; }
.pin svg { width: 36px; height: 36px; }
.current { background: #3a2a2b; border: 1px solid #443535; }
.alert { background: #81434b; }
.run::after, .current::after, .alert::after { content: ""; position: absolute; left: 50%; bottom: 1px; width: 9px; height: 5px; margin-left: -4.500px; border-radius: 3px; background: #a39997; }
.current::after { width: 24px; margin-left: -12px; bottom: 0; background: #d9a0e6; }
.alert::after { background: #ff9ea8; }
.count { position: absolute; right: 1px; top: 5px; width: 31px; height: 24px; border-radius: 12px; background: #d89fe5; color: #111; font-size: 16px; line-height: 24px; text-align: center; }
.tray { display: flex; align-items: center; margin-left: auto; padding-right: 29px; font-size: 17px; line-height: 23.500px; }
.up { width: 18px; height: 10px; margin-right: 30px; }
.lang { text-align: center; width: 36px; margin-right: 27px; }
.wifi { width: 24px; height: 18px; margin-right: 12px; }
.vol { width: 24px; height: 18px; margin-right: 12px; }
.bat { width: 24px; height: 20px; margin-right: 24px; }
.clock { text-align: right; width: 84px; white-space: nowrap; letter-spacing: .2px; }
```
